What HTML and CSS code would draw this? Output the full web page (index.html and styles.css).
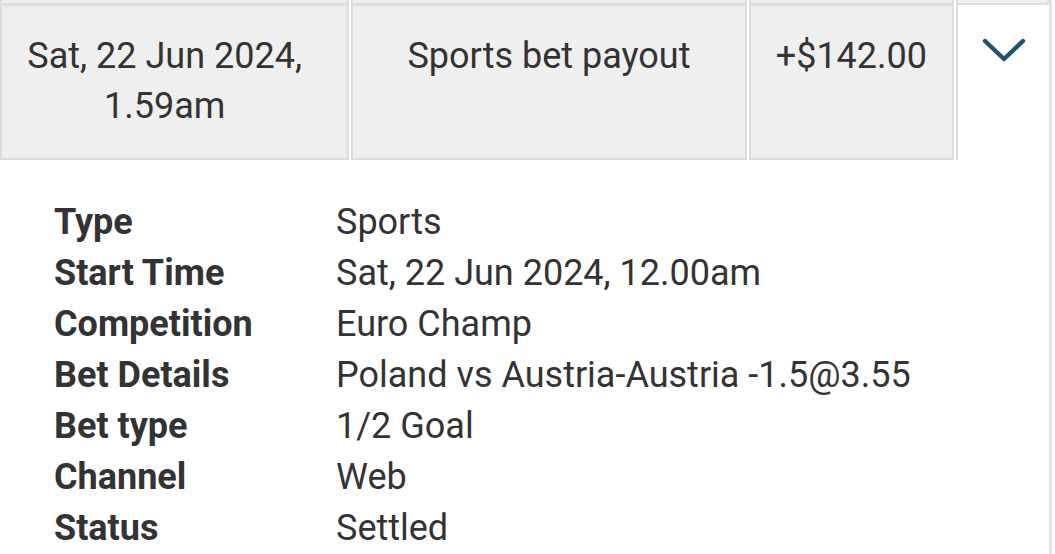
FILE: index.html
```html
<!DOCTYPE html>
<html>
<head>
<meta charset="utf-8">
<link rel="stylesheet" href="styles.css">
</head>
<body>
<div class="table">
  <div class="row prev">
    <div class="cell c1"></div>
    <div class="cell c2"></div>
    <div class="cell c3"></div>
    <div class="cell c4"></div>
  </div>
  <div class="row main">
    <div class="cell c1">Sat, 22 Jun 2024,<br>1.59am</div>
    <div class="cell c2">Sports bet payout</div>
    <div class="cell c3">+$142.00</div>
    <div class="cell c4 toggle">
      <svg width="46" height="28" viewBox="0 0 46 28"><path d="M4 4 L23 22 L42 4" fill="none" stroke="#1c5273" stroke-width="4.4" stroke-linecap="round" stroke-linejoin="round"/></svg>
    </div>
  </div>
  <div class="details">
    <div class="label">Type</div><div class="value">Sports</div>
    <div class="label">Start Time</div><div class="value">Sat, 22 Jun 2024, 12.00am</div>
    <div class="label">Competition</div><div class="value">Euro Champ</div>
    <div class="label">Bet Details</div><div class="value">Poland vs Austria-Austria -1.5@3.55</div>
    <div class="label">Bet type</div><div class="value">1/2 Goal</div>
    <div class="label">Channel</div><div class="value">Web</div>
    <div class="label">Status</div><div class="value">Settled</div>
  </div>
</div>
</body>
</html>
```

FILE: styles.css
```css
html, body {
  margin: 0;
  padding: 0;
  background: #ffffff;
}
body {
  font-family: Roboto, "Liberation Sans", sans-serif;
  color: #333333;
  overflow: hidden;
}
.table {
  width: 1052px;
  border-right: 3px solid #e2e2e2;
  box-sizing: border-box;
  height: 554px;
}
.row {
  display: flex;
  gap: 2px;
}
.prev {
  height: 5px;
  overflow: hidden;
}
.prev .cell {
  height: 5px;
  box-sizing: border-box;
  border-bottom: 2px solid #dddddd;
  padding: 0;
}
.prev .c4 {
  background: #efefef;
}
.cell {
  background: #efefef;
  border: 2px solid #dddddd;
  border-top: none;
  box-sizing: border-box;
  font-size: 36px;
  line-height: 50px;
  text-align: center;
  padding-top: 24px;
}
.main .cell {
  height: 155px;
  border-top: 2px solid #e6e6e6;
}
.c1 { width: 350px; }
.main .c1 { padding-right: 20px; }
.c2 { width: 396px; }
.c3 { width: 206px; }
.c4 { width: 93px; }
.main .toggle {
  background: #ffffff;
  border: none;
  border-left: 2px solid #dddddd;
  padding-top: 32px;
  display: flex;
  justify-content: center;
  align-items: flex-start;
}
.details {
  display: grid;
  grid-template-columns: 282px auto;
  padding: 37px 0 0 54px;
  font-size: 36px;
  line-height: 51px;
}
.label {
  font-weight: 700;
}
```
